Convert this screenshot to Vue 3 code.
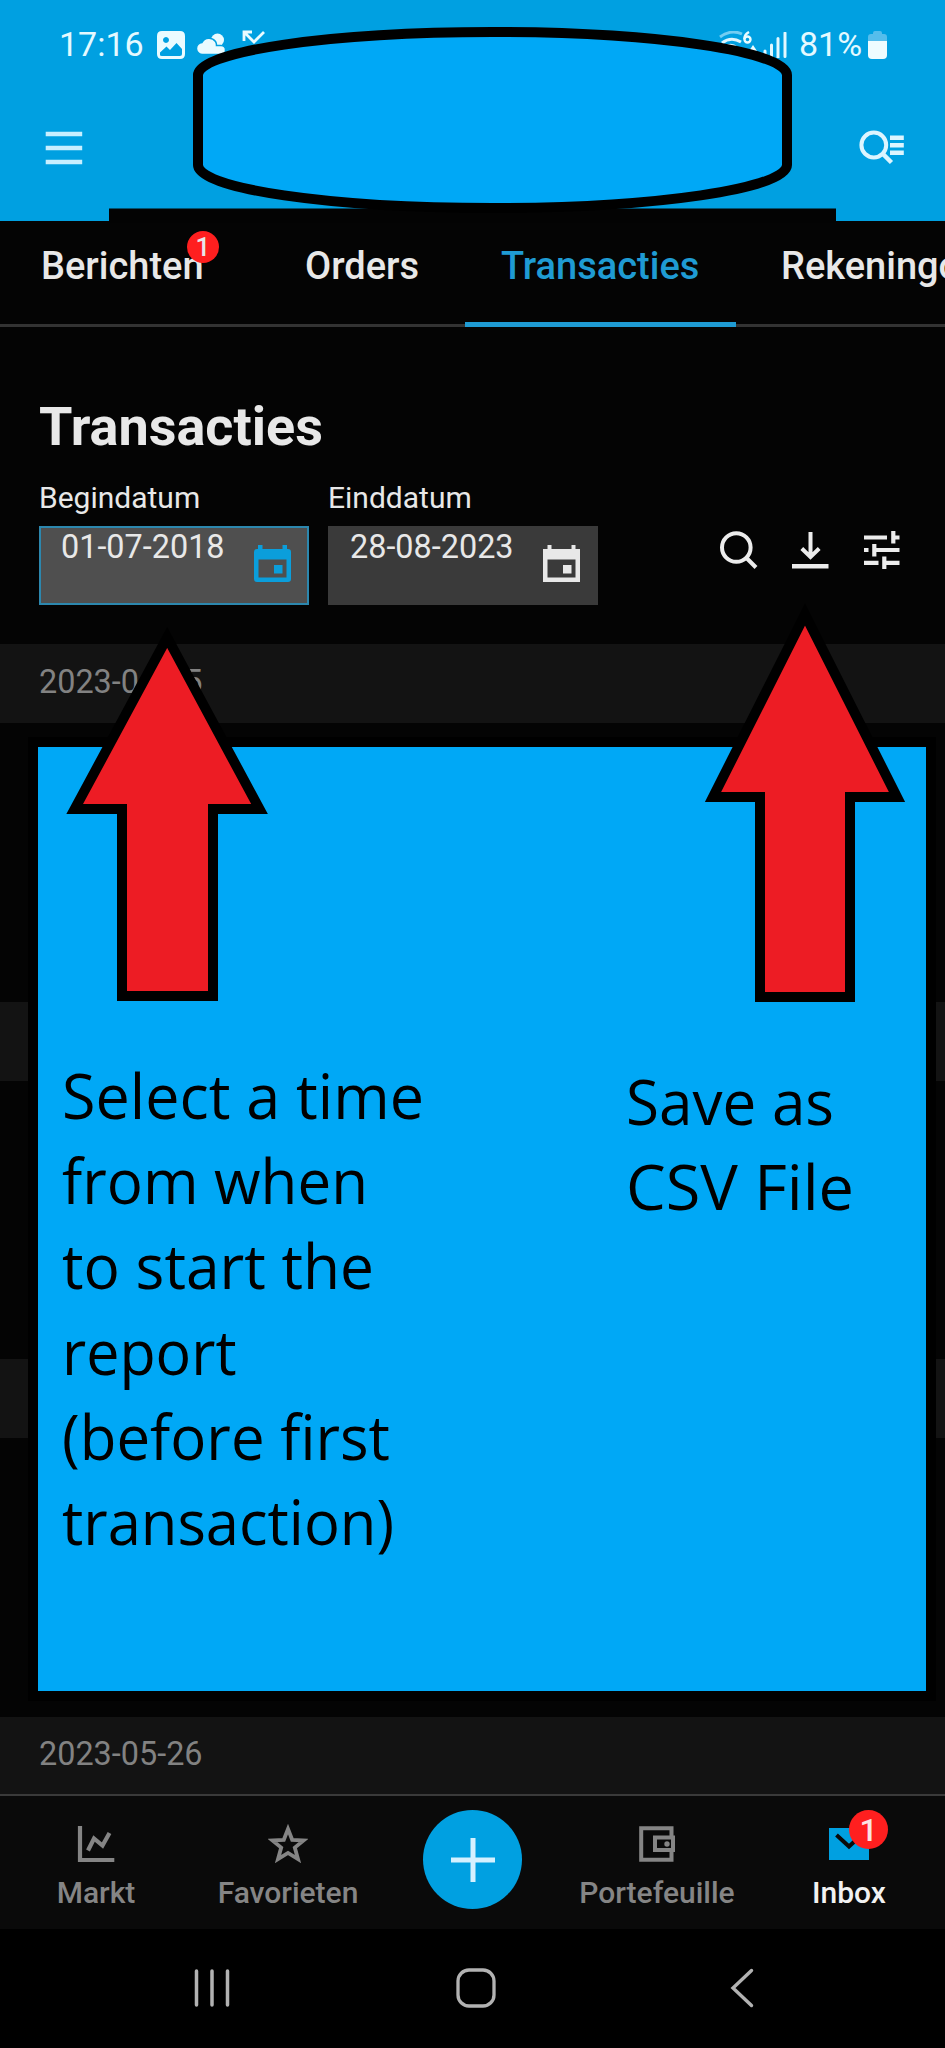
<script setup>
const tabs = [
  { label: 'Berichten', badge: 1, cls: 'tab-messages' },
  { label: 'Orders', cls: 'tab-orders' },
  { label: 'Transacties', cls: 'tab-transactions' },
  { label: 'Rekeningoverzicht', cls: 'tab-account' },
]
const leftNote = [
  { text: 'Select a time', y: 1118.5, w: 362 },
  { text: 'from when', y: 1203.7, w: 306 },
  { text: 'to start the', y: 1289, w: 312 },
  { text: 'report', y: 1375, w: 174.5 },
  { text: '(before first', y: 1460, w: 328 },
  { text: 'transaction)', y: 1545, w: 332 },
]
const rightNote = [
  { text: 'Save as', y: 1125, w: 208 },
  { text: 'CSV File', y: 1210, w: 228 },
]
</script>

<template>
  <div class="phone">
    <header class="header">
      <div class="status">
        <span class="clock">17:16</span>
        <svg class="ic-image" width="28" height="28" viewBox="0 0 28 28">
          <path fill-rule="evenodd" d="M5 0H23Q28 0 28 5V23Q28 28 23 28H5Q0 28 0 23V5Q0 0 5 0ZM9 6a3 3 0 1 0 .01 0ZM3 21.5V24Q3 25 5 25H23Q25 25 25 23V18L19.500 12 13 19 9.500 15.500Z" fill="#eafbff" />
        </svg>
        <svg class="ic-cloud" width="30" height="24" viewBox="0 0 30 24">
          <circle cx="20.500" cy="7" r="6.500" fill="#eafbff" />
          <path d="M6 21.500a6 6 0 0 1-1-12A8 8 0 0 1 18.500 8.500 7 7 0 0 1 19.500 12.500H24a4.500 4.500 0 0 1 0 9Z" fill="#eafbff" stroke="#00a0e1" stroke-width="1.500" />
        </svg>
        <svg class="ic-missed" width="24" height="16" viewBox="0 0 24 16">
          <path d="M2 11V2H10M3 3L12 12 22 2" fill="none" stroke="#eafbff" stroke-width="2.800" />
        </svg>
        <span class="spacer"></span>
        <svg class="ic-wifi" width="38" height="28" viewBox="0 0 38 28">
          <path d="M1 6Q12-2 23 3" fill="none" stroke="#73cdf2" stroke-width="3" />
          <path d="M3 12Q12 5 22 11M7 16Q12 12 18 17" fill="none" stroke="#dff6ff" stroke-width="3" />
          <path d="M30 1Q25 4 25.500 8" fill="none" stroke="#eafbff" stroke-width="2.400" />
          <circle cx="28.500" cy="8.500" r="3" fill="none" stroke="#eafbff" stroke-width="2.400" />
          <path d="M30 20 34 14 38 20Z" fill="#eafbff" />
        </svg>
        <svg class="ic-signal" width="24" height="26" viewBox="0 0 24 26">
          <path d="M2 19V26M8.500 13V26M15 6.500V26M22 1V24.500" stroke="#e2f8ff" stroke-width="3" stroke-linecap="round" />
        </svg>
        <span class="percent">81%</span>
        <svg class="ic-battery" width="19" height="28" viewBox="0 0 19 28">
          <path d="M0 12V6Q0 3 3 3H5V2Q5 0 7 0H12Q14 0 14 2V3H16Q19 3 19 6V12Z" fill="#55bdec" />
          <path d="M0 10H19V24Q19 28 15 28H4Q0 28 0 24Z" fill="#eefcff" />
        </svg>
      </div>
      <div class="toolbar">
        <svg width="38" height="34" viewBox="0 0 38 34">
          <path d="M.700 3H37.200M.700 17H37.200M.700 31H37.200" stroke="#c8efff" stroke-width="4.600" />
        </svg>
        <svg width="46" height="36" viewBox="0 0 46 36">
          <circle cx="14.800" cy="15" r="12.400" fill="none" stroke="#dcf5ff" stroke-width="4" />
          <path d="M23.500 23.500 32.500 32.500" stroke="#dcf5ff" stroke-width="4.500" />
          <path d="M31 7.800H44.800M31 15.200H44.800M31 22.700H44.800" stroke="#dcf5ff" stroke-width="4.400" />
        </svg>
      </div>
    </header>

    <nav class="tabs">
      <div v-for="t in tabs" :key="t.label" class="tab" :class="t.cls">
        <span class="tab-label">{{ t.label }}</span>
        <span v-if="t.badge" class="tab-badge">{{ t.badge }}</span>
      </div>
    </nav>

    <main class="content">
      <h1>Transacties</h1>
      <div class="filters">
        <div class="field">
          <label>Begindatum</label>
          <div class="input focused">
            <span>01-07-2018</span>
            <svg width="37" height="37" viewBox="0 0 37 37">
              <path fill-rule="evenodd" d="M0 7Q0 4 3 4H4V0H8.500V4H28.500V0H33V4H34Q37 4 37 7V34Q37 37 34 37H3Q0 37 0 34ZM4.500 14.500V32.500H32.500V14.500ZM20 20H28.500V28.500H20Z" fill="#0b9edb" />
            </svg>
          </div>
        </div>
        <div class="field">
          <label>Einddatum</label>
          <div class="input">
            <span>28-08-2023</span>
            <svg width="37" height="37" viewBox="0 0 37 37">
              <path fill-rule="evenodd" d="M0 4H4.500V0H8.500V4H28.500V0H32.500V4H37V37H0ZM4.500 14.500V32.500H32.500V14.500ZM20 20H28.500V28.500H20Z" fill="#e8e8e8" />
            </svg>
          </div>
        </div>
        <div class="actions">
          <svg width="38" height="38" viewBox="0 0 38 38">
            <circle cx="16.300" cy="16.500" r="14.300" fill="none" stroke="#ececec" stroke-width="4" />
            <path d="M26 26.500 36 36.500" stroke="#ececec" stroke-width="4" />
          </svg>
          <svg width="37" height="38" viewBox="0 0 37 38">
            <path d="M18.500 1V26M9.800 17.500 18.500 26 27.200 17.500" fill="none" stroke="#ececec" stroke-width="4" />
            <path d="M0 35.200H36.500" stroke="#ececec" stroke-width="4.600" />
          </svg>
          <svg width="36" height="38" viewBox="0 0 36 38">
            <path d="M0 6.500H23M29 6.500H35.500M29.300 0V12.500M0 19H4.500M10 19H35.500M10.300 13V25.500M0 31.800H14.500M20 31.800H35.500M20.300 25.500V38" fill="none" stroke="#ececec" stroke-width="4.200" />
          </svg>
        </div>
      </div>

      <section class="group g1"><div class="day">2023-06-05</div></section>
      <section class="group"><div class="day"></div></section>
      <section class="group"><div class="day"></div></section>
      <section class="group"><div class="day">2023-05-26</div></section>
    </main>

    <nav class="bottom">
      <div class="item">
        <svg width="40" height="40" viewBox="0 0 40 40">
          <path d="M4 2V36H38.300" fill="none" stroke="#858585" stroke-width="4.200" />
          <path d="M12 26.500 18 14.500 26.500 21.500 33.500 9" fill="none" stroke="#858585" stroke-width="4.200" />
        </svg>
        <span>Markt</span>
      </div>
      <div class="item">
        <svg width="40" height="40" viewBox="0 0 40 40">
          <path d="M20 5 24.200 15.800 35.500 16.400 26.800 23.600 30 35.200 20 29 10 35.200 13.200 23.600 4.500 16.400 15.800 15.800Z" fill="none" stroke="#858585" stroke-width="3.800" />
        </svg>
        <span>Favorieten</span>
      </div>
      <div class="item add">
        <div class="fab">
          <svg width="44" height="44" viewBox="0 0 44 44"><path d="M0 22H44M22 0V44" stroke="#d5f1ff" stroke-width="5" /></svg>
        </div>
      </div>
      <div class="item">
        <svg width="40" height="40" viewBox="0 0 40 40">
          <path d="M34.500 12V4.200H4.200V35.800H34.500V27M18 13.500H36V26H18Z" fill="none" stroke="#858585" stroke-width="4" />
          <circle cx="30" cy="20" r="2.700" fill="#858585" />
        </svg>
        <span>Portefeuille</span>
      </div>
      <div class="item active">
        <svg width="40" height="40" viewBox="0 0 40 40">
          <path d="M0 4H40V36H0Z" fill="#00a0e1" />
          <path d="M7.500 11 20 22.500 32.500 11" fill="none" stroke="#0a0a0a" stroke-width="4" />
        </svg>
        <b class="inbox-badge">1</b>
        <span>Inbox</span>
      </div>
    </nav>

    <footer class="system">
      <svg width="36" height="40" viewBox="0 0 36 40">
        <path d="M2.500 3V37M18 3V37M33.500 3V37" stroke="#b2b2b2" stroke-width="3.500" stroke-linecap="round" />
      </svg>
      <svg class="home" width="40" height="40" viewBox="0 0 40 40">
        <rect x="2" y="2" width="36" height="36" rx="11" fill="none" stroke="#b2b2b2" stroke-width="3.300" />
      </svg>
      <svg width="24" height="40" viewBox="0 0 24 40">
        <path d="M21.500 2.500 3 20 21.500 37.500" fill="none" stroke="#b2b2b2" stroke-width="3.400" stroke-linecap="round" />
      </svg>
    </footer>

    <!-- Instruction layer drawn over the app -->
    <svg class="notes" width="945" height="2048" viewBox="0 0 945 2048">
      <rect x="109" y="208.500" width="727" height="14" fill="#030303" />
      <rect x="198" y="32" width="589" height="176" rx="294.500" ry="43" fill="#00a8f6" stroke="#000" stroke-width="10" />
      <rect x="33" y="742" width="898" height="954" fill="#00a8f6" stroke="#000" stroke-width="10" />
      <g fill="#ed1c24" stroke="#000" stroke-width="10" stroke-miterlimit="10">
        <path d="M167.200 637.500 259.500 809H213V996H122V809H74.700Z" />
        <path d="M805 614.500 897 797H850V997H760V797H713Z" />
      </g>
      <text v-for="l in leftNote" :key="l.text" class="note" x="62" :y="l.y" :textLength="l.w" lengthAdjust="spacingAndGlyphs">{{ l.text }}</text>
      <text v-for="l in rightNote" :key="l.text" class="note" x="626" :y="l.y" :textLength="l.w" lengthAdjust="spacingAndGlyphs">{{ l.text }}</text>
    </svg>
  </div>
</template>

<style>
body { margin: 0; background: #000; }
</style>

<style scoped>
* { box-sizing: border-box; }
svg { display: block; flex: none; }
.phone {
  position: relative;
  width: 945px;
  height: 2048px;
  overflow: hidden;
  background: #040404;
  font-family: Roboto, "Noto Sans", sans-serif;
  color: #e8e8e8;
  display: flex;
  flex-direction: column;
}
.header { height: 221px; flex: none; background: #00a0e1; }
.status {
  height: 89px;
  display: flex;
  align-items: center;
  padding: 0 58px;
  font-size: 34px;
  line-height: 40px;
  color: #e4f9ff;
}
.clock { width: 99px; padding-left: 1px; margin-bottom: 1px; }
.ic-image { margin-right: 12px; }
.ic-cloud { margin-right: 15px; }
.ic-missed { margin-bottom: 13px; }
.spacer { flex: 1; }
.ic-wifi { margin-right: 6px; }
.ic-signal { margin-right: 12px; }
.percent { width: 69px; margin-bottom: 1px; }
.toolbar {
  height: 117px;
  padding: 0 40px 0 45px;
  display: flex;
  align-items: center;
  justify-content: space-between;
}
.tabs {
  height: 106px;
  flex: none;
  display: flex;
  background: linear-gradient(#333, #333) 0 103px / 100% 3px no-repeat;
  overflow: hidden;
  font-size: 38px;
  font-weight: 500;
  line-height: 44px;
  white-space: nowrap;
}
.tab { position: relative; height: 106px; padding-top: 23px; flex: none; }
.tab-messages { width: 263px; padding-left: 41px; }
.tab-orders { width: 202px; padding-left: 42px; }
.tab-transactions { width: 271px; padding-left: 36px; color: #1f9bd3; border-bottom: 5px solid #1f9bd3; }
.tab-account { padding-left: 45px; }
.tab-badge {
  position: absolute;
  left: 187px;
  top: 10px;
  width: 32px;
  height: 32px;
  border-radius: 50%;
  background: #ff1f1f;
  font-size: 26px;
  line-height: 32px;
  text-align: center;
}
.content { flex: 1; min-height: 0; padding-top: 68px; }
h1 { margin: 0 0 21px 39px; font-size: 54px; line-height: 64px; font-weight: 700; }
.filters { display: flex; padding-left: 39px; height: 125px; }
.field { width: 270px; margin-right: 19px; }
.field label { display: block; font-size: 30px; line-height: 36px; margin-bottom: 10px; }
.input {
  height: 79px;
  background: #3a3a3a;
  display: flex;
  justify-content: space-between;
  padding: 2px 18px 0 22px;
  font-size: 32.4px;
  line-height: 38px;
}
.input.focused { background: #4f4f4f; border: 2px solid #2c87ae; padding: 0 16px 0 20px; }
.input svg { margin-top: 17px; }
.actions { display: flex; gap: 35px; padding-top: 51px; margin-left: 103px; }
.actions svg:first-child { margin-right: -1px; }
.group { height: 357.5px; }
.day {
  height: 79px;
  background: #131313;
  padding: 0 0 4px 39px;
  display: flex;
  align-items: center;
  font-size: 32.4px;
  color: #828282;
}
.g1 { margin-top: 39px; }
.bottom {
  height: 135px;
  flex: none;
  display: grid;
  grid-template-columns: 192px 192px 177px 192px 192px;
  background: #0a0a0a;
  border-top: 2px solid #3a3a3a;
  font-size: 30px;
  font-weight: 500;
  line-height: 36px;
  color: #858585;
}
.item {
  position: relative;
  display: flex;
  flex-direction: column;
  align-items: center;
  padding-top: 28px;
  gap: 11px;
}
.item.active { color: #f2f2f2; }
.item.add { padding-top: 14px; }
.fab {
  width: 99px;
  height: 99px;
  border-radius: 50%;
  background: #00a0e1;
  display: flex;
  align-items: center;
  justify-content: center;
}
.inbox-badge {
  position: absolute;
  left: 96px;
  top: 14px;
  width: 39px;
  height: 39px;
  border-radius: 50%;
  background: #ff1f1f;
  color: #fbe3e3;
  font-size: 32px;
  font-weight: 500;
  line-height: 40px;
  text-align: center;
}
.system {
  height: 119px;
  flex: none;
  background: #000;
  display: flex;
  align-items: flex-start;
  padding: 39px 0 0 194px;
}
.home { margin: 0 234px 0 226px; }
.notes { position: absolute; left: 0; top: 0; }
.note { font-family: "Open Sans", "Noto Sans", sans-serif; font-size: 63px; fill: #000; stroke: none; }
</style>
